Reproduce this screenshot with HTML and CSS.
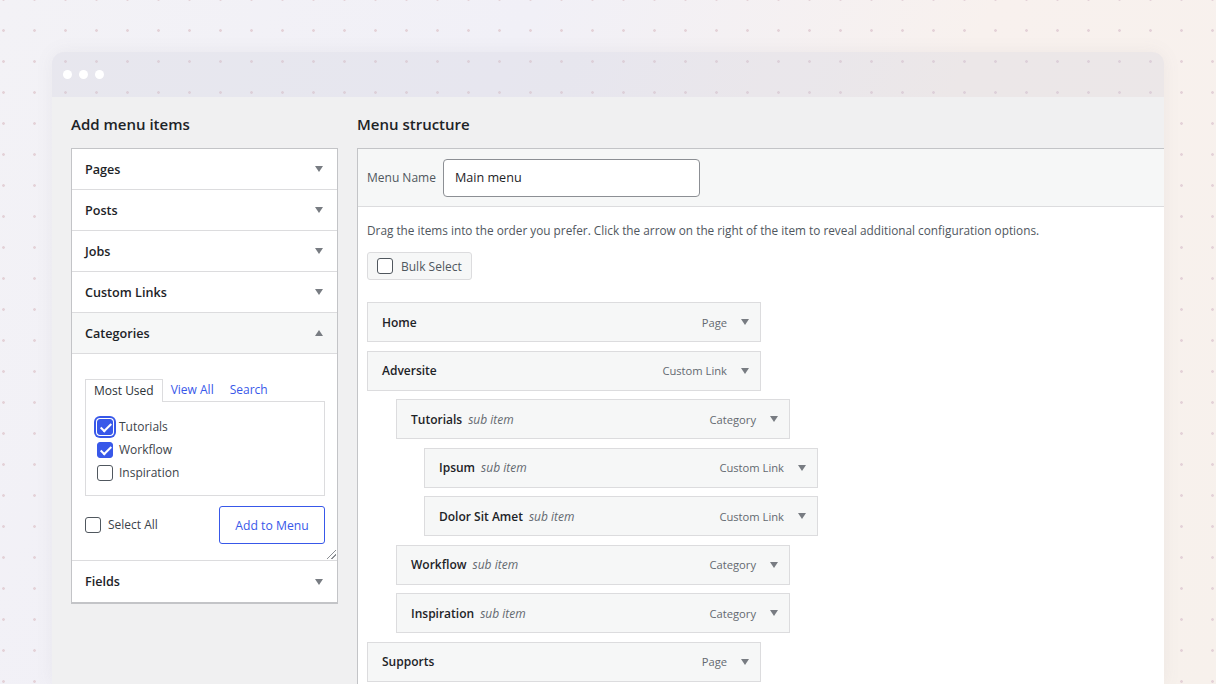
FILE: index.html
```html
<!DOCTYPE html>
<html lang="en">
  <head>
    <meta charset="UTF-8" />
    <meta name="viewport" content="width=device-width, initial-scale=1.0" />
    <title>Menus</title>
    <link rel="stylesheet" href="styles.css">
  </head>
  <body>
    <div class="window">
      <div class="titlebar">
        <span class="dot"></span><span class="dot"></span><span class="dot"></span>
      </div>
      <div class="content">
        <!-- left column -->
        <div class="col-left">
          <h2>Add menu items</h2>
          <div class="accordion">
            <div class="acc-row"><span>Pages</span><span class="arrow"></span></div>
            <div class="acc-row"><span>Posts</span><span class="arrow"></span></div>
            <div class="acc-row"><span>Jobs</span><span class="arrow"></span></div>
            <div class="acc-row"><span>Custom Links</span><span class="arrow"></span></div>
            <div class="acc-row open"><span>Categories</span><span class="arrow up"></span></div>
            <div class="acc-body">
              <div class="tabs">
                <span class="tab active">Most Used</span>
                <span class="tab">View All</span>
                <span class="tab">Search</span>
              </div>
              <div class="tab-panel">
                <label class="check"><span class="box checked focus"></span>Tutorials</label>
                <label class="check"><span class="box checked"></span>Workflow</label>
                <label class="check"><span class="box"></span>Inspiration</label>
              </div>
              <div class="acc-actions">
                <label class="check select-all"><span class="box"></span>Select All</label>
                <button class="btn-add">Add to Menu</button>
              </div>
              <span class="resize"></span>
            </div>
            <div class="acc-row last"><span>Fields</span><span class="arrow"></span></div>
          </div>
        </div>

        <!-- right column -->
        <div class="col-right">
          <h2>Menu structure</h2>
          <div class="menu-box">
            <div class="menu-header">
              <label class="menu-name-label">Menu Name</label>
              <input class="menu-name" type="text" value="Main menu" />
            </div>
            <div class="menu-body">
              <p class="hint">Drag the items into the order you prefer. Click the arrow on the right of the item to reveal additional configuration options.</p>
              <div class="bulk"><span class="box"></span>Bulk Select</div>
              <ul class="items">
                <li class="item"><b>Home</b><span class="type">Page</span><span class="arrow"></span></li>
                <li class="item"><b>Adversite</b><span class="type">Custom Link</span><span class="arrow"></span></li>
                <li class="item depth-1"><b>Tutorials</b><i>sub item</i><span class="type">Category</span><span class="arrow"></span></li>
                <li class="item depth-2"><b>Ipsum</b><i>sub item</i><span class="type">Custom Link</span><span class="arrow"></span></li>
                <li class="item depth-2"><b>Dolor Sit Amet</b><i>sub item</i><span class="type">Custom Link</span><span class="arrow"></span></li>
                <li class="item depth-1"><b>Workflow</b><i>sub item</i><span class="type">Category</span><span class="arrow"></span></li>
                <li class="item depth-1"><b>Inspiration</b><i>sub item</i><span class="type">Category</span><span class="arrow"></span></li>
                <li class="item"><b>Supports</b><span class="type">Page</span><span class="arrow"></span></li>
              </ul>
            </div>
          </div>
        </div>
      </div>
    </div>
  </body>
</html>
```

FILE: styles.css
```css
* {
  box-sizing: border-box;
}
html,
body {
  height: 100%;
}
body {
  margin: 0;
  overflow: hidden;
  font-family: "Open Sans", "Noto Sans", Arial, sans-serif;
  color: #1d2327;
  background-color: #f5f1f2;
  background-image:
    radial-gradient(circle, #e4d2d8 1.1px, transparent 1.6px),
    linear-gradient(115deg, #f3f2f6 0%, #f1f0f7 35%, #f8f1ee 65%, #f7f1ec 100%);
  background-size: 31px 31px, 100% 100%;
  background-position: -12px 15px, 0 0;
  padding: 52px 52px 0 52px;
}
.window {
  height: 100%;
  border-radius: 12px 12px 0 0;
  overflow: hidden;
  box-shadow: 0 0 18px rgba(120, 110, 130, 0.08);
  display: flex;
  flex-direction: column;
}
.titlebar {
  height: 45px;
  flex: none;
  background: rgba(205, 205, 218, 0.28);
  display: flex;
  align-items: center;
  gap: 7px;
  padding-left: 11px;
}
.dot {
  width: 9px;
  height: 9px;
  border-radius: 50%;
  background: #fff;
}
.content {
  flex: 1;
  background: #f0f0f1;
  display: flex;
  gap: 19px;
  padding-left: 19px;
}
h2 {
  flex: none;
  font-size: 15px;
  font-weight: 600;
  margin: 0;
  height: 51px;
  padding-top: 16px;
  line-height: 22px;
  color: #1d2327;
}
.col-left {
  width: 267px;
  flex: none;
}
.accordion {
  background: #fff;
  border: 1px solid #c3c4c7;
  border-bottom-width: 2px;
}
.acc-row {
  height: 41px;
  display: flex;
  align-items: center;
  justify-content: space-between;
  padding: 0 14px 0 13px;
  font-size: 12.6px;
  font-weight: 600;
  color: #1d2327;
  border-bottom: 1px solid #dcdcde;
}
.acc-row.open {
  background: #f6f7f7;
}
.acc-row.last {
  border-bottom: 0;
}
.arrow {
  width: 0;
  height: 0;
  border-left: 4px solid transparent;
  border-right: 4px solid transparent;
  border-top: 6px solid #787c82;
}
.arrow.up {
  border-top: 0;
  border-bottom: 6px solid #787c82;
}
.acc-body {
  position: relative;
  height: 207px;
  padding: 23px 12px 0 13px;
  border-bottom: 1px solid #dcdcde;
}
.tabs {
  display: flex;
  font-size: 12px;
  height: 24px;
  align-items: flex-end;
}
.tab {
  padding: 0 8px;
  line-height: 22px;
  color: #3858e9;
}
.tab.active {
  color: #2c3338;
  border: 1px solid #dcdcde;
  border-bottom: 0;
  background: #fff;
  margin-bottom: -1px;
  position: relative;
  z-index: 1;
}
.tab-panel {
  border: 1px solid #dcdcde;
  height: 95px;
  padding: 17px 11px 0;
  display: flex;
  flex-direction: column;
  gap: 7px;
}
.check {
  display: flex;
  align-items: center;
  gap: 6px;
  font-size: 12px;
  color: #3c434a;
  line-height: 16px;
}
.box {
  width: 16px;
  height: 16px;
  border: 1px solid #50575e;
  border-radius: 3px;
  background: #fff;
  flex: none;
  position: relative;
}
.box.checked {
  background: #3858e9;
  border-color: #3858e9;
}
.box.checked::after {
  content: "";
  position: absolute;
  left: 5px;
  top: 1px;
  width: 4px;
  height: 9px;
  border: solid #fff;
  border-width: 0 2px 2px 0;
  transform: rotate(45deg);
}
.box.focus {
  box-shadow: 0 0 0 1px #fff, 0 0 0 3px #3858e9;
}
.acc-actions {
  display: flex;
  justify-content: space-between;
  align-items: center;
  margin-top: 10px;
}
.select-all {
  gap: 7px;
}
.btn-add {
  width: 106px;
  height: 38px;
  border: 1px solid #3858e9;
  border-radius: 3px;
  background: #fff;
  color: #3858e9;
  font-family: inherit;
  font-size: 12.2px;
}
.resize {
  position: absolute;
  right: 1px;
  bottom: 1px;
  width: 9px;
  height: 9px;
  background: linear-gradient(135deg, transparent 45%, #8c8f94 45%, #8c8f94 52%, transparent 52%, transparent 72%, #8c8f94 72%, #8c8f94 80%, transparent 80%);
}
.col-right {
  flex: 1;
  min-width: 0;
  display: flex;
  flex-direction: column;
}
.menu-box {
  flex: 1;
  background: #fff;
  border-top: 1px solid #c3c4c7;
  border-left: 1px solid #c3c4c7;
}
.menu-header {
  height: 58px;
  background: #f6f7f7;
  border-bottom: 1px solid #dcdcde;
  display: flex;
  align-items: center;
  padding-left: 9px;
  gap: 7px;
}
.menu-name-label {
  font-size: 12px;
  color: #50575e;
}
.menu-name {
  width: 257px;
  height: 38px;
  border: 1px solid #8c8f94;
  border-radius: 4px;
  padding: 0 11px;
  font-family: inherit;
  font-size: 12.6px;
  color: #1d2327;
}
.menu-body {
  padding: 14px 9px 0 9px;
}
.hint {
  margin: 0;
  font-size: 11.8px;
  color: #50575e;
  line-height: 18px;
}
.bulk {
  display: inline-flex;
  align-items: center;
  gap: 8px;
  margin-top: 13px;
  height: 28px;
  padding: 0 9px;
  border: 1px solid #dcdcde;
  border-radius: 3px;
  background: #f6f7f7;
  font-size: 12px;
  color: #50575e;
}
.items {
  list-style: none;
  margin: 22px 0 0 0;
  padding: 0;
  display: flex;
  flex-direction: column;
  gap: 8.5px;
}
.item {
  width: 394px;
  height: 40px;
  border: 1px solid #dcdcde;
  background: #f6f7f7;
  display: flex;
  align-items: center;
  padding: 0 11px 0 14px;
  font-size: 12px;
}
.item b {
  font-weight: 600;
  color: #1d2327;
}
.item i {
  margin-left: 6px;
  color: #646970;
}
.item .type {
  margin-left: auto;
  margin-right: 14px;
  font-size: 11.2px;
  color: #646970;
}
.depth-1 {
  margin-left: 29px;
}
.depth-2 {
  margin-left: 57px;
}
```
